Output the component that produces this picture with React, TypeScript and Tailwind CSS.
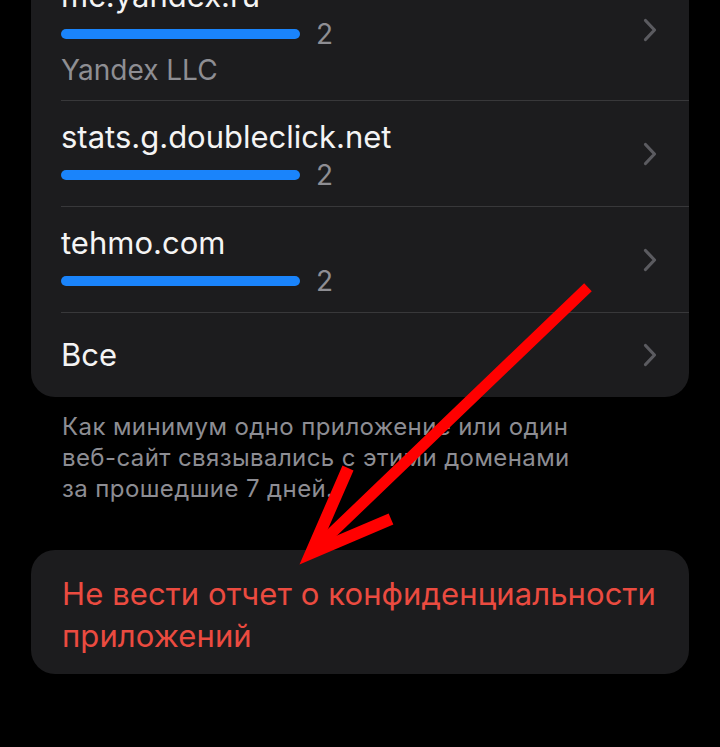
import React from "react";

const font = { fontFamily: 'Inter, "Noto Sans", sans-serif' };

function Chevron() {
  return (
    <svg width="14" height="24" viewBox="0 0 14 24" className="shrink-0">
      <path d="M2.5 2.5 L11.5 12 L2.5 21.5" fill="none" stroke="#5b5b60" strokeWidth="3.2" strokeLinecap="round" strokeLinejoin="round" />
    </svg>
  );
}

function Bar() {
  return (
    <div className="mt-[7px] flex h-[26px] items-center gap-4">
      <div className="h-[10px] w-[239px] rounded-full bg-[#1a84fb]" />
      <span className="text-[28px] leading-none text-[#8e8e93]">2</span>
    </div>
  );
}

function DomainRow({ name, sub, border = true }: { name: string; sub?: string; border?: boolean }) {
  return (
    <div className={`ml-[30px] flex items-center pr-[32px] ${border ? "border-b border-[#38383a]" : ""}`}>
      <div className={`flex-1 pt-[18px] ${sub ? "pb-[13px]" : "pb-[18px]"}`}>
        <div className="whitespace-nowrap text-[31px] leading-[36px] text-[#f4f4f4]">{name}</div>
        <Bar />
        {sub && <div className="mt-[6px] text-[28px] leading-[34px] text-[#8e8e93]">{sub}</div>}
      </div>
      <Chevron />
    </div>
  );
}

export default function App() {
  return (
    <div className="relative h-[747px] w-[720px] overflow-hidden bg-black" style={font}>
      <div className="mx-[31px] mt-[-40px] overflow-hidden rounded-b-[24px] bg-[#1c1c1e]">
        <DomainRow name="mc.yandex.ru" sub="Yandex LLC" />
        <DomainRow name="stats.g.doubleclick.net" />
        <DomainRow name="tehmo.com" />
        <div className="ml-[30px] flex h-[84px] items-center pr-[32px]">
          <div className="flex-1 text-[31px] text-[#f4f4f4]">Все</div>
          <Chevron />
        </div>
      </div>

      <p className="mx-[62px] mt-[14px] whitespace-nowrap text-[24px] leading-[31px] tracking-[0.4px] text-[#8d8d93]">
        Как минимум одно приложение или один
        <br />
        веб-сайт связывались с этими доменами
        <br />
        за прошедшие 7 дней.
      </p>

      <div className="mx-[31px] mt-[46px] rounded-[24px] bg-[#1c1c1e] px-[31px] pb-[17px] pt-[23px]">
        <div className="whitespace-nowrap text-[31px] leading-[42px] tracking-[0.1px] text-[#eb4b40]">
          Не вести отчет о конфиденциальности
          <br />
          приложений
        </div>
      </div>

      <svg className="pointer-events-none absolute left-0 top-0" width="720" height="747" viewBox="0 0 720 747">
        <line x1="584" y1="291" x2="314" y2="550" stroke="#ff0000" strokeWidth="11" strokeLinecap="square" />
        <polyline points="348,468 311,553 391,519" fill="none" stroke="#ff0000" strokeWidth="12" strokeLinejoin="miter" strokeMiterlimit="10" />
      </svg>
    </div>
  );
}
